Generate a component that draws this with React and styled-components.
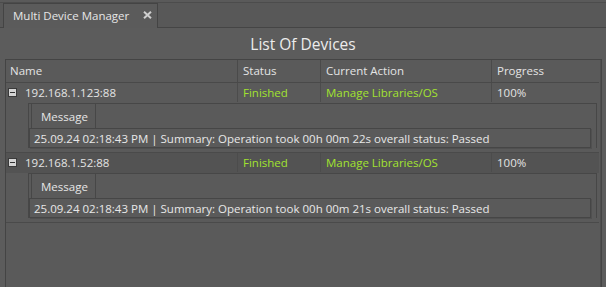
import React from "react";
import styled, { createGlobalStyle } from "styled-components";

const Global = createGlobalStyle`
  html, body { margin: 0; padding: 0; background: #5a5a5a; }
  body { font-family: "Open Sans", "Noto Sans", sans-serif; font-size: 11.5px; color: #e4e4e4; }
  * { box-sizing: border-box; }
`;

const Window = styled.div`
  width: 606px;
  height: 287px;
  overflow: hidden;
  display: flex;
  flex-direction: column;
  background: #5a5a5a;
`;

const TabStrip = styled.div`
  margin-top: 2px;
  height: 26px;
  border-top: 1px solid #4c4c4c;
  border-bottom: 1px solid #454545;
  background: #585858;
  padding: 1px 0 0 3px;
  display: flex;
  align-items: flex-end;
`;

const Tab = styled.div`
  width: 155px;
  height: 25px;
  margin-bottom: -1px;
  background: #5b5b5b;
  border: 1px solid #444;
  border-bottom: none;
  display: flex;
  align-items: center;
  padding: 0 0 2px 9px;
  gap: 14px;
`;

const TabLabel = styled.span`
  font-size: 11.5px;
  color: #e6e6e6;
`;

const CloseIcon = () => (
  <svg width="9" height="8" viewBox="0 0 9 8">
    <path d="M1 0.8 L8 7.2 M8 0.8 L1 7.2" stroke="#cfcfcf" strokeWidth="2" />
  </svg>
);

const Panel = styled.div`
  flex: 1;
  display: flex;
  flex-direction: column;
  background: #5c5c5c;
  min-height: 0;
`;

const Title = styled.div`
  height: 31px;
  display: flex;
  align-items: center;
  justify-content: center;
  font-size: 15.5px;
  color: #ececec;
  padding: 1px 0 0 0;
`;

const Grid = styled.div`
  flex: 1;
  margin: 0 4px 0 5px;
  border: 1px solid #444;
  border-bottom: none;
  display: flex;
  flex-direction: column;
  background: #5a5a5a;
  padding-right: 2px;
  box-shadow: inset -1px 0 0 #4e4e4e;
`;

const HeaderRow = styled.div`
  display: flex;
  height: 23px;
  border-bottom: 1px solid #494949;
`;

const Row = styled.div`
  display: flex;
  height: 20px;
  padding-bottom: 1px;
  background: ${(p) => (p.$selected ? "#535353" : "#5a5a5a")};
`;

const Cell = styled.div`
  width: ${(p) => p.$w}px;
  flex: ${(p) => (p.$grow ? "1" : "none")};
  display: flex;
  align-items: center;
  gap: 8px;
  padding-left: ${(p) => (p.$first ? 2 : 5)}px;
  border-left: ${(p) => (p.$first ? "none" : "1px solid #4c4c4c")};
  color: ${(p) => (p.$green ? "#a2e330" : "#e4e4e4")};
  white-space: nowrap;
`;

const HeadCell = styled(Cell)`
  padding-left: ${(p) => (p.$first ? 4 : 5)}px;
  padding-bottom: 1px;
  border-left-color: #4a4a4a;
`;

const Toggle = styled.span`
  width: 9px;
  height: 9px;
  background: #d4d4d4;
  border: 1px solid #3a3a3a;
  display: flex;
  align-items: center;
  justify-content: center;
  &::after {
    content: "";
    width: 5px;
    height: 1px;
    background: #333;
  }
`;

const Detail = styled.div`
  display: flex;
  height: 50px;
  padding: 0 2px 4px 22px;
  border-bottom: 1px solid #4a4a4a;
`;

const DetailFrame = styled.div`
  flex: 1;
  display: flex;
  flex-direction: column;
  border: 1px solid #474747;
  border-bottom: none;
  padding: 0 5px 0 0;
`;

const DetailTabs = styled.div`
  display: flex;
  height: 24px;
  padding-left: 2px;
`;

const DetailTab = styled.div`
  width: 65px;
  border: 1px solid #474747;
  border-top: none;
  border-bottom: none;
  display: flex;
  align-items: center;
  padding-left: 9px;
  color: #e6e6e6;
`;

const MessageLine = styled.div`
  height: 20px;
  border: 1px solid #464646;
  box-shadow: 1px 1px 0 #505050;
  display: flex;
  align-items: center;
  padding-left: 4px;
  color: #e8e8e8;
  white-space: nowrap;
`;

const columns = [
  { key: "name", label: "Name", w: 231 },
  { key: "status", label: "Status", w: 83 },
  { key: "action", label: "Current Action", w: 171 },
  { key: "progress", label: "Progress", w: 106 },
];

const devices = [
  {
    name: "192.168.1.123:88",
    status: "Finished",
    action: "Manage Libraries/OS",
    progress: "100%",
    message: "25.09.24 02:18:43 PM | Summary: Operation took 00h 00m 22s overall status: Passed",
  },
  {
    name: "192.168.1.52:88",
    status: "Finished",
    action: "Manage Libraries/OS",
    progress: "100%",
    message: "25.09.24 02:18:43 PM | Summary: Operation took 00h 00m 21s overall status: Passed",
    selected: true,
  },
];

export default function App() {
  return (
    <>
      <Global />
      <Window>
        <TabStrip>
          <Tab>
            <TabLabel>Multi Device Manager</TabLabel>
            <CloseIcon />
          </Tab>
        </TabStrip>
        <Panel>
          <Title>List Of Devices</Title>
          <Grid>
            <HeaderRow>
              {columns.map((c, i) => (
                <HeadCell key={c.key} $w={c.w} $first={i === 0} $grow={i === columns.length - 1}>
                  {c.label}
                </HeadCell>
              ))}
            </HeaderRow>
            {devices.map((d) => (
              <React.Fragment key={d.name}>
                <Row $selected={d.selected}>
                  <Cell $w={231} $first>
                    <Toggle />
                    {d.name}
                  </Cell>
                  <Cell $w={83} $green>{d.status}</Cell>
                  <Cell $w={171} $green>{d.action}</Cell>
                  <Cell $w={106} $grow>{d.progress}</Cell>
                </Row>
                <Detail>
                  <DetailFrame>
                    <DetailTabs>
                      <DetailTab>Message</DetailTab>
                    </DetailTabs>
                    <MessageLine>{d.message}</MessageLine>
                  </DetailFrame>
                </Detail>
              </React.Fragment>
            ))}
          </Grid>
        </Panel>
      </Window>
    </>
  );
}
